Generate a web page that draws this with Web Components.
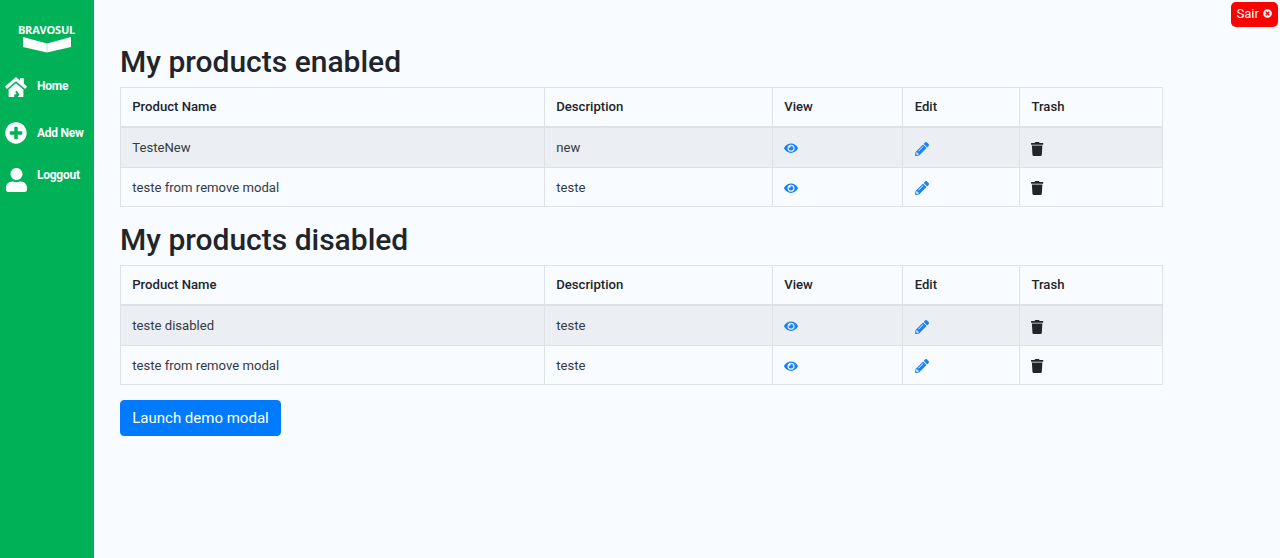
<!DOCTYPE html>
<html lang="en">
<head>
<meta charset="utf-8">
<title>My products</title>
<style>
    html, body { margin: 0; height: 100%; }
    body {
        background: #f8fbff;
        color: #212529;
        font-family: Roboto, "Liberation Sans", sans-serif;
    }
</style>
</head>
<body>
<app-shell>
    <side-bar slot="side">
        <nav-item icon="home" width="22" shift="-1">Home</nav-item>
        <nav-item icon="plus" width="22" style="margin-top:24px">Add New</nav-item>
        <nav-item icon="user" width="21" style="margin-top:25px" shift="-5" inset="1">Loggout</nav-item>
    </side-bar>
    <exit-chip slot="top">Sair</exit-chip>

    <product-table heading="My products enabled">
        <product-row striped><span slot="name">TesteNew</span><span slot="description">new</span></product-row>
        <product-row><span slot="name">teste from remove modal</span><span slot="description">teste</span></product-row>
    </product-table>
    <product-table heading="My products disabled">
        <product-row striped><span slot="name">teste disabled</span><span slot="description">teste</span></product-row>
        <product-row><span slot="name">teste from remove modal</span><span slot="description">teste</span></product-row>
    </product-table>
    <primary-button>Launch demo modal</primary-button>
</app-shell>

<script>
const ICONS = {
    home: ['0 0 22 20', 'M11 0 15 3.4V1.2H18.8V6.6L22 9.6 20.2 12 11 4.2 1.8 12 0 9.6ZM3.6 12.6 11 6.2 18.4 12.6V20H12.8L14.4 17.2 11.4 13.6 10.2 15.2 11.8 17 9.2 17.4V20H3.6Z'],
    plus: ['0 0 512 512', 'M256 8C119 8 8 119 8 256s111 248 248 248 248-111 248-248S393 8 256 8zm144 276c0 6.6-5.4 12-12 12h-92v92c0 6.6-5.4 12-12 12h-56c-6.6 0-12-5.4-12-12v-92h-92c-6.6 0-12-5.4-12-12v-56c0-6.6 5.4-12 12-12h92v-92c0-6.6 5.4-12 12-12h56c6.6 0 12 5.4 12 12v92h92c6.6 0 12 5.4 12 12v56z'],
    user: ['0 0 448 512', 'M224 256c70.7 0 128-57.3 128-128S294.7 0 224 0 96 57.3 96 128s57.3 128 128 128zm89.6 32h-16.7c-22.2 10.2-46.9 16-72.9 16s-50.6-5.8-72.9-16h-16.7C60.2 288 0 348.2 0 422.4V464c0 26.5 21.5 48 48 48h352c26.5 0 48-21.5 48-48v-41.6c0-74.2-60.2-134.4-134.4-134.4z'],
    eye: ['0 0 576 512', 'M572.52 241.4C518.29 135.59 410.93 64 288 64S57.68 135.64 3.48 241.41a32.35 32.35 0 0 0 0 29.19C57.71 376.41 165.07 448 288 448s230.32-71.64 284.52-177.41a32.35 32.35 0 0 0 0-29.19zM288 400a144 144 0 1 1 144-144 143.93 143.93 0 0 1-144 144zm0-240a95.31 95.31 0 0 0-25.31 3.79 47.85 47.85 0 0 1-66.9 66.9A95.78 95.78 0 1 0 288 160z'],
    pencil: ['0 0 512 512', 'M497.9 142.1l-46.1 46.1c-4.7 4.7-12.3 4.7-17 0l-111-111c-4.7-4.7-4.7-12.3 0-17l46.1-46.1c18.7-18.7 49.1-18.7 67.9 0l60.1 60.1c18.8 18.7 18.8 49.1 0 67.9zM284.2 99.8L21.6 362.4.4 483.9c-2.9 16.4 11.4 30.6 27.8 27.8l121.5-21.3 262.6-262.6c4.7-4.7 4.7-12.3 0-17l-111-111c-4.8-4.7-12.4-4.7-17.1 0zM124.1 339.9c-5.5-5.5-5.5-14.3 0-19.8l154-154c5.5-5.5 14.3-5.5 19.8 0s5.5 14.3 0 19.8l-154 154c-5.5 5.5-14.3 5.5-19.8 0zM88 424h48v36.3l-64.5 11.3-31.1-31.1L51.7 376H88v48z'],
    trash: ['0 0 448 512', 'M432 32H312l-9.4-18.7A24 24 0 0 0 281.1 0H166.8a23.72 23.72 0 0 0-21.4 13.3L136 32H16A16 16 0 0 0 0 48v32a16 16 0 0 0 16 16h416a16 16 0 0 0 16-16V48a16 16 0 0 0-16-16zM53.2 467a48 48 0 0 0 47.9 45h245.8a48 48 0 0 0 47.9-45L416 128H32z'],
    times: ['0 0 512 512', 'M256 8C119 8 8 119 8 256s111 248 248 248 248-111 248-248S393 8 256 8zm121.6 313.1c4.7 4.7 4.7 12.3 0 17L338 377.6c-4.7 4.7-12.3 4.7-17 0L256 312l-65.1 65.6c-4.7 4.7-12.3 4.7-17 0L134.4 338c-4.7-4.7-4.7-12.3 0-17l65.6-65-65.6-65.1c-4.7-4.7-4.7-12.3 0-17l39.6-39.6c4.7-4.7 12.3-4.7 17 0l65 65.7 65.1-65.6c4.7-4.7 12.3-4.7 17 0l39.6 39.6c4.7 4.7 4.7 12.3 0 17L312 256l65.6 65.1z']
};

function icon(name, width, color) {
    const [box, d] = ICONS[name];
    return `<svg viewBox="${box}" width="${width}" fill="${color}" style="display:block;flex:none"><path d="${d}"/></svg>`;
}

const COLUMNS = '423px 228px 130.4px 116.8px 142.8px';

class AppShell extends HTMLElement {
    constructor() {
        super();
        this.attachShadow({ mode: 'open' });
        this.shadowRoot.innerHTML = `
            <style>
                :host { display: flex; height: 558px; overflow: hidden; }
                main { flex: 1; display: flex; flex-direction: column; }
                .top { display: flex; justify-content: flex-end; height: 43.5px; padding: 2px 2px 0; box-sizing: border-box; }
                .content { padding-left: 26px; width: 1043px; }
            </style>
            <slot name="side"></slot>
            <main>
                <div class="top"><slot name="top"></slot></div>
                <div class="content"><slot></slot></div>
            </main>
        `;
    }
}

class SideBar extends HTMLElement {
    constructor() {
        super();
        this.attachShadow({ mode: 'open' });
        this.shadowRoot.innerHTML = `
            <style>
                :host {
                    display: flex;
                    flex-direction: column;
                    flex: none;
                    width: 94px;
                    background: #00b157;
                    color: #fff;
                }
                .logo { display: flex; flex-direction: column; align-items: center; padding-top: 24px; height: 52px; }
                .word { font: 700 11px/12px "Open Sans", Roboto, sans-serif; letter-spacing: -.2px; margin-left: -1px; }
                nav { display: flex; flex-direction: column; padding-left: 5px; }
            </style>
            <div class="logo">
                <span class="word">BRAVOSUL</span>
                <svg width="48" height="16" viewBox="0 0 48 16" style="display:block;margin-top:1px"><path d="M0 0 24 6.5 48 0V10L24 15.5 0 10Z" fill="#fff"/><path d="M24 6.5V15.5" stroke="#00b157" stroke-opacity=".3"/></svg>
            </div>
            <nav><slot></slot></nav>
        `;
    }
}

class NavItem extends HTMLElement {
    constructor() {
        super();
        this.attachShadow({ mode: 'open' });
    }
    connectedCallback() {
        const shift = this.getAttribute('shift') || 0;
        const inset = this.getAttribute('inset') || 0;
        this.shadowRoot.innerHTML = `
            <style>
                :host { display: flex; align-items: center; height: 22px; color: #fff; }
                .ic { width: ${32 - inset}px; padding-left: ${inset}px; display: flex; }
                .label { font: 700 12px/14px Roboto, sans-serif; letter-spacing: -.25px; position: relative; top: ${shift}px; }
            </style>
            <span class="ic">${icon(this.getAttribute('icon'), this.getAttribute('width'), '#fff')}</span>
            <span class="label"><slot></slot></span>
        `;
    }
}

class ExitChip extends HTMLElement {
    constructor() {
        super();
        this.attachShadow({ mode: 'open' });
        this.shadowRoot.innerHTML = `
            <style>
                :host {
                    display: inline-flex;
                    align-items: center;
                    gap: 4px;
                    height: 25px;
                    padding: 0 6px 2px 5px;
                    box-sizing: border-box;
                    background: #fe0000;
                    border-radius: 5px;
                    color: #fff;
                    font: 400 13.125px Roboto, sans-serif;
                }
            </style>
            <slot></slot>${icon('times', 9, '#fff')}
        `;
    }
}

class ProductTable extends HTMLElement {
    constructor() {
        super();
        this.attachShadow({ mode: 'open' });
    }
    connectedCallback() {
        const heads = ['Product Name', 'Description', 'View', 'Edit', 'Trash'];
        this.shadowRoot.innerHTML = `
            <style>
                :host { display: block; margin-bottom: 14.5px; }
                h2 { margin: 0 0 7.5px; font: 500 30px/36px Roboto, sans-serif; color: #212529; }
                .table { border: 1px solid #dee2e6; }
                .head {
                    display: grid;
                    grid-template-columns: ${COLUMNS};
                    height: 38px;
                    border-bottom: 2px solid #dee2e6;
                }
                .head div {
                    padding: 0 11.25px;
                    font: 500 13.125px/38px Roboto, sans-serif;
                    color: #212529;
                    border-left: 1px solid #dee2e6;
                }
                .head div:first-child { border-left: 0; }
            </style>
            <h2>${this.getAttribute('heading')}</h2>
            <div class="table">
                <div class="head">${heads.map(h => `<div>${h}</div>`).join('')}</div>
                <slot></slot>
            </div>
        `;
    }
}

class ProductRow extends HTMLElement {
    constructor() {
        super();
        this.attachShadow({ mode: 'open' });
        this.shadowRoot.innerHTML = `
            <style>
                :host {
                    display: grid;
                    grid-template-columns: ${COLUMNS};
                    height: 39px;
                    border-top: 1px solid #dee2e6;
                    color: #343a40;
                    font: 400 13.125px Roboto, sans-serif;
                }
                :host(:first-of-type) { border-top: 0; }
                :host(:last-of-type) { height: 38px; }
                :host([striped]) { background: rgba(0, 0, 0, .05); }
                .cell {
                    display: flex;
                    align-items: center;
                    padding: 0 11.25px;
                    border-left: 1px solid #dee2e6;
                }
                .cell:first-of-type { border-left: 0; }
                .ic { padding-top: 2px; }
            </style>
            <div class="cell"><slot name="name"></slot></div>
            <div class="cell"><slot name="description"></slot></div>
            <div class="cell"><span class="ic">${icon('eye', 14, '#1a82f7')}</span></div>
            <div class="cell"><span class="ic">${icon('pencil', 14, '#1a82f7')}</span></div>
            <div class="cell"><span class="ic">${icon('trash', 12.25, '#212529')}</span></div>
        `;
    }
}

class PrimaryButton extends HTMLElement {
    constructor() {
        super();
        this.attachShadow({ mode: 'open' });
        this.shadowRoot.innerHTML = `
            <style>
                :host { display: inline-block; margin-top: .4px; }
                button {
                    display: block;
                    height: 36px;
                    padding: 0 11.25px;
                    border: 1px solid #007bff;
                    border-radius: 4px;
                    background: #007bff;
                    color: #fff;
                    font: 400 15px Roboto, sans-serif;
                }
            </style>
            <button type="button"><slot></slot></button>
        `;
    }
}

customElements.define('app-shell', AppShell);
customElements.define('side-bar', SideBar);
customElements.define('nav-item', NavItem);
customElements.define('exit-chip', ExitChip);
customElements.define('product-table', ProductTable);
customElements.define('product-row', ProductRow);
customElements.define('primary-button', PrimaryButton);
</script>
</body>
</html>
